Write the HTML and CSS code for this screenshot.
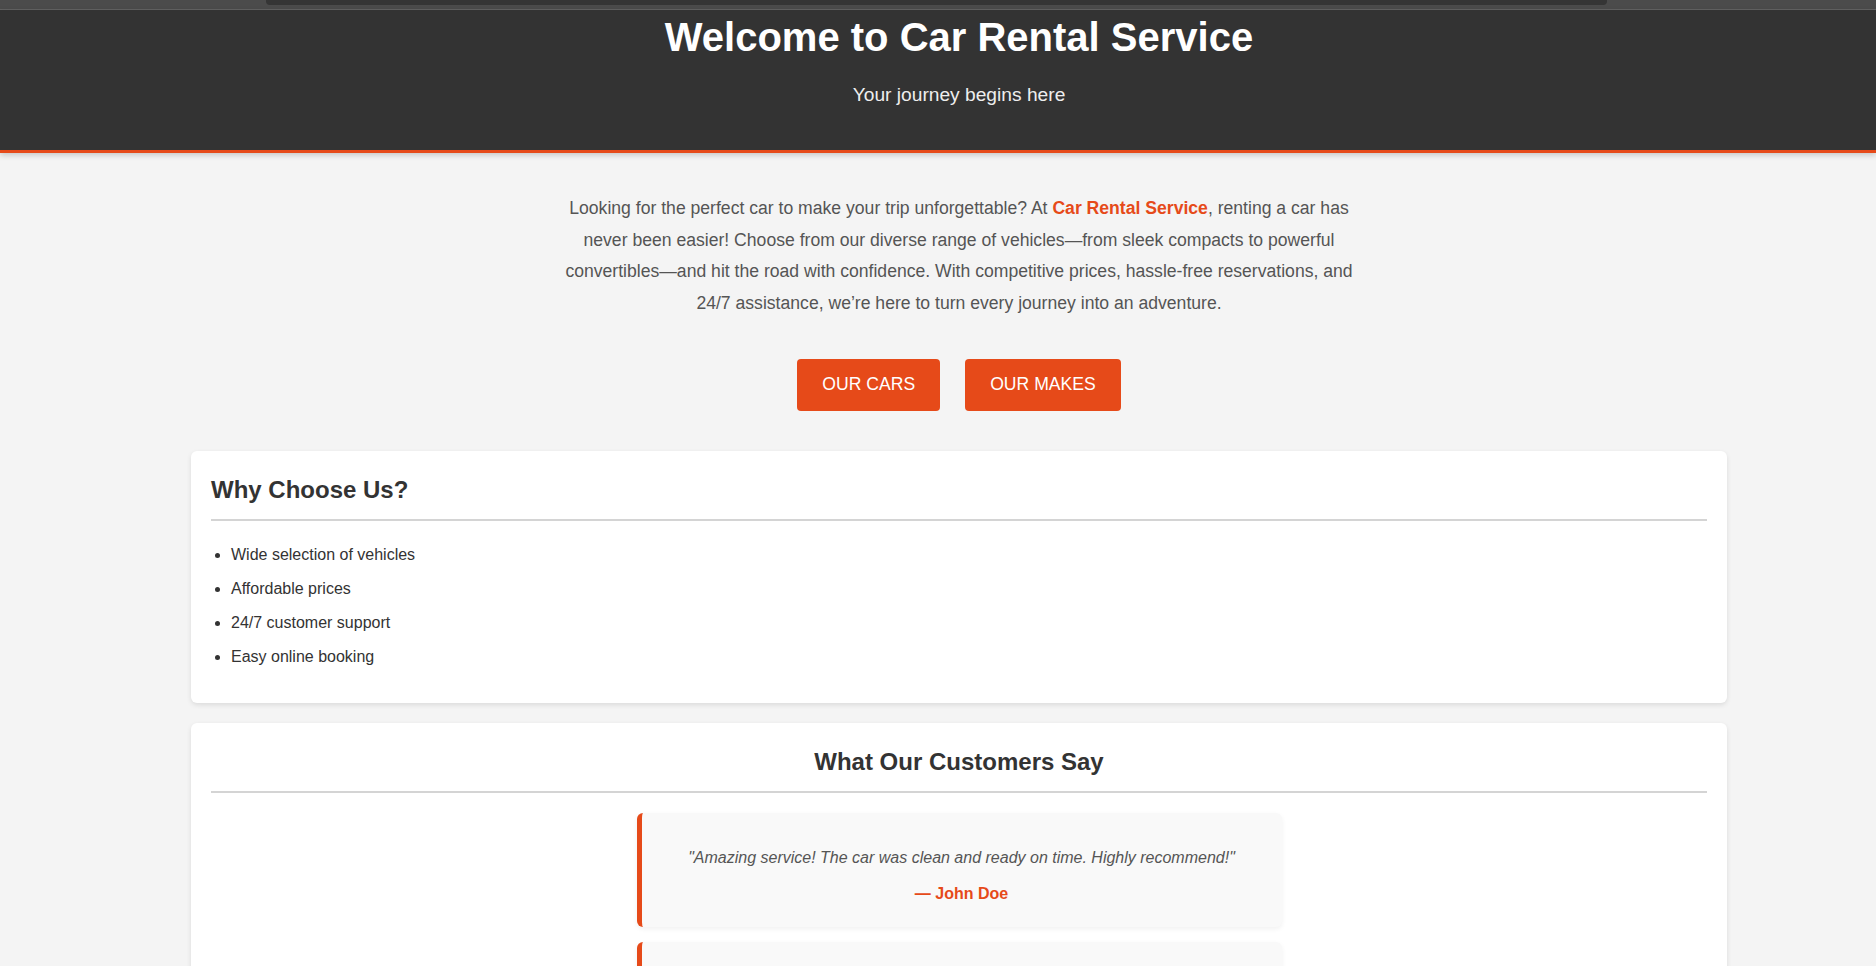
FILE: index.html
```html
<!DOCTYPE html>
<html lang="en">
<head>
<meta charset="utf-8">
<title>Car Rental Service</title>
<link rel="stylesheet" href="styles.css">
</head>
<body>
<div class="topstrip"><div class="topstrip-tab"></div></div>
<header class="hero-header">
  <div class="shift">
    <h1 class="title">Welcome to Car Rental Service</h1>
    <p class="subtitle">Your journey begins here</p>
  </div>
</header>
<main class="main shift">
  <p class="intro">Looking for the perfect car to make your trip unforgettable? At <strong class="brand">Car Rental Service</strong>, renting a car has never been easier! Choose from our diverse range of vehicles—from sleek compacts to powerful convertibles—and hit the road with confidence. With competitive prices, hassle-free reservations, and 24/7 assistance, we’re here to turn every journey into an adventure.</p>
  <div class="actions">
    <a class="btn" href="#">OUR CARS</a>
    <a class="btn" href="#">OUR MAKES</a>
  </div>
  <section class="card">
    <h2 class="card-title">Why Choose Us?</h2>
    <ul class="features">
      <li>Wide selection of vehicles</li>
      <li>Affordable prices</li>
      <li>24/7 customer support</li>
      <li>Easy online booking</li>
    </ul>
  </section>
  <section class="card">
    <h2 class="card-title centered">What Our Customers Say</h2>
    <div class="testimonials">
      <div class="testimonial">
        <p class="quote">"Amazing service! The car was clean and ready on time. Highly recommend!"</p>
        <p class="author">— John Doe</p>
      </div>
      <div class="testimonial">
        <p class="quote">"Great prices and friendly staff. Booking online was quick and easy."</p>
        <p class="author">— Jane Smith</p>
      </div>
    </div>
  </section>
</main>
</body>
</html>
```

FILE: styles.css
```css
html, body {
  margin: 0;
  padding: 0;
}
body {
  background: #f4f4f4;
  font-family: "Liberation Sans", Arial, sans-serif;
  color: #333;
  font-size: 16px;
}
.topstrip {
  height: 9px;
  background: #4b4b4b;
  border-bottom: 1px solid #636363;
}
.topstrip-tab {
  margin-left: 266px;
  width: 1341px;
  height: 5px;
  background: #353535;
  border-radius: 0 0 4px 4px;
}
.shift {
  padding-left: 42px;
}
.hero-header {
  background: #333;
  color: #fff;
  text-align: center;
  padding: 5px 0 44px;
  border-bottom: 3px solid #e64a19;
  box-shadow: 0 2px 6px rgba(0, 0, 0, 0.2);
  position: relative;
}
.title {
  margin: 0;
  font-size: 40px;
  font-weight: bold;
}
.subtitle {
  margin: 24px 0 0;
  font-size: 19.2px;
  color: #eee;
}
.main {
  padding-bottom: 40px;
}
.intro {
  max-width: 800px;
  margin: 40px auto 0;
  text-align: center;
  font-size: 17.6px;
  line-height: 1.8;
  color: #555;
}
.brand {
  color: #e64a19;
}
.actions {
  display: flex;
  justify-content: center;
  gap: 25px;
  margin-top: 39px;
}
.btn {
  display: block;
  background: #e64a19;
  color: #fff;
  text-decoration: none;
  font-size: 17.6px;
  padding: 15.5px 25px;
  border-radius: 4px;
}
.card {
  max-width: 1536px;
  box-sizing: border-box;
  margin: 40px auto 0;
  background: #fff;
  border-radius: 6px;
  padding: 20px;
  box-shadow: 0 2px 5px rgba(0, 0, 0, 0.1);
}
.card + .card {
  margin-top: 20px;
}
.card-title {
  margin: 5px 0 0;
  font-size: 24px;
  padding-bottom: 15px;
  border-bottom: 2px solid #d4d4d4;
  color: #333;
}
.centered {
  text-align: center;
}
.features {
  margin: 17px 0 9px;
  padding-left: 20px;
}
.features li {
  padding: 4px 0;
  line-height: 26px;
}
.testimonials {
  margin-top: 20px;
  display: flex;
  flex-direction: column;
  align-items: center;
  gap: 15px;
}
.testimonial {
  width: 600px;
  background: #f9f9f9;
  border-left: 5px solid #e64a19;
  border-radius: 6px;
  padding: 20px;
  text-align: center;
  box-shadow: 0 2px 5px rgba(0, 0, 0, 0.06);
}
.quote {
  margin: 16px 0;
  font-style: italic;
  color: #555;
}
.author {
  margin: 18px 0 4px;
  font-weight: bold;
  color: #e64a19;
}
```
